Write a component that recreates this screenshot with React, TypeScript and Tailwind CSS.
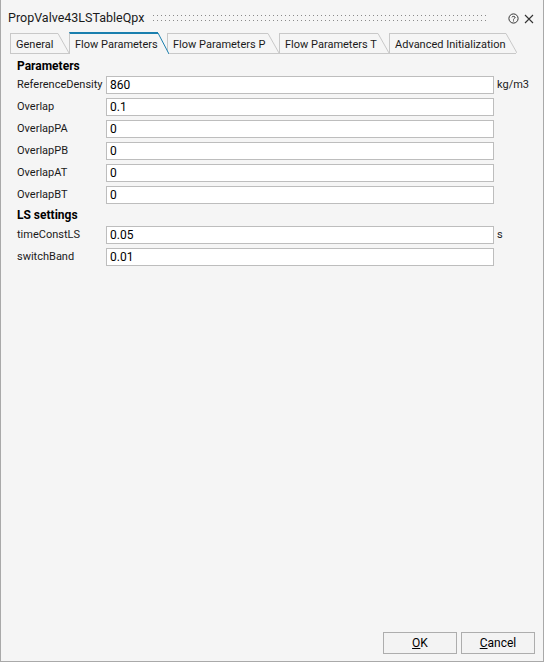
import React from "react";

const font = { fontFamily: "Roboto, 'Liberation Sans', sans-serif" };

const tabs: { label: string; w: number }[] = [
  { label: "General", w: 59 },
  { label: "Flow Parameters", w: 98 },
  { label: "Flow Parameters P", w: 112 },
  { label: "Flow Parameters T", w: 110 },
  { label: "Advanced Initialization", w: 123 },
];

const Tab: React.FC<{ label: string; w: number; active?: boolean }> = ({ label, w, active }) => {
  const h = active ? 22 : 20;
  return (
    <div
      className={`flex items-stretch flex-shrink-0 relative ${active ? "mb-[-1px] z-10" : ""}`}
      style={{ height: h, width: w }}
    >
      <div
        className={`flex-1 flex items-center pl-[5px] border-l border-l-[#c8c8c8] bg-[#f5f5f5] ${
          active ? "border-t-2 border-t-[#1a7fae] pt-[1px]" : "border-t border-t-[#c8c8c8] pt-[1px]"
        }`}
      >
        <span className="text-[11px] text-[#1a1a1a] leading-none whitespace-nowrap">{label}</span>
      </div>
      <svg width="11" height={h} className="block flex-shrink-0">
        <polygon points={`0,0 0.5,0 11,${h} 0,${h}`} fill="#f5f5f5" />
        <line x1="0" y1={active ? 1 : 0.5} x2="11" y2={h} stroke={active ? "#1a7fae" : "#c8c8c8"} strokeWidth="1" />
      </svg>
    </div>
  );
};

const Row: React.FC<{ label: string; value: string; unit?: string }> = ({ label, value, unit }) => (
  <div className="flex items-center h-[18px]">
    <div className="w-[105px] flex-shrink-0 pl-[16px] text-[11px] text-[#1a1a1a] whitespace-nowrap">{label}</div>
    <div className="w-[388px] flex-shrink-0 h-[18px] bg-white border border-[#bdbdbd] flex items-center px-[3px] text-[12px] text-black">
      {value}
    </div>
    {unit && <span className="ml-[3px] text-[11px] text-[#1a1a1a]">{unit}</span>}
  </div>
);

export default function App() {
  return (
    <div
      className="w-[544px] h-[662px] bg-[#f5f5f5] border-x border-b border-[#a9a9a9] flex flex-col"
      style={font}
    >
      {/* title bar */}
      <div className="flex items-center h-[35px] pl-[7px] pr-[10px] pt-[2px]">
        <span className="w-[145px] flex-shrink-0 text-[12.5px] text-[#1a1a1a] whitespace-nowrap">PropValve43LSTableQpx</span>
        <svg width="336" height="7" className="block flex-shrink-0">
          <defs>
            <pattern id="dots" width="4" height="5" patternUnits="userSpaceOnUse">
              <rect x="0" y="0" width="1" height="1" fill="#8a8a8a" />
            </pattern>
          </defs>
          <rect x="0" y="0" width="336" height="7" fill="url(#dots)" />
        </svg>
        <svg width="11" height="11" viewBox="0 0 11 11" className="ml-[19px] block flex-shrink-0">
          <circle cx="5.5" cy="5.5" r="4.6" fill="none" stroke="#333" strokeWidth="1" />
          <path d="M3.9 4.3 C3.9 3.2 7.1 3.0 7.1 4.4 C7.1 5.4 5.5 5.4 5.5 6.6" fill="none" stroke="#333" strokeWidth="1" />
          <rect x="5" y="7.4" width="1" height="1" fill="#333" />
        </svg>
        <svg width="10" height="10" viewBox="0 0 10 10" className="ml-[5px] block flex-shrink-0">
          <path d="M1 1 L9 9 M9 1 L1 9" stroke="#333" strokeWidth="1.1" />
        </svg>
      </div>

      {/* tabs */}
      <div className="flex items-end mx-[9px] w-[506px] border-b border-[#c8c8c8] h-[20px] mt-[-1px]">
        {tabs.map((t) => (
          <Tab key={t.label} label={t.label} w={t.w} active={t.label === "Flow Parameters"} />
        ))}
      </div>

      {/* content */}
      <div className="flex flex-col pt-[3px]">
        <div className="h-[18px] pl-[16px] text-[12px] font-bold text-black flex items-center">Parameters</div>
        <div className="flex flex-col gap-[4px] mt-[1px]">
          <Row label="ReferenceDensity" value="860" unit="kg/m3" />
          <Row label="Overlap" value="0.1" />
          <Row label="OverlapPA" value="0" />
          <Row label="OverlapPB" value="0" />
          <Row label="OverlapAT" value="0" />
          <Row label="OverlapBT" value="0" />
        </div>
        <div className="h-[18px] mt-[2px] pl-[16px] text-[12px] font-bold text-black flex items-center">LS settings</div>
        <div className="flex flex-col gap-[4px] mt-[2px]">
          <Row label="timeConstLS" value="0.05" unit="s" />
          <Row label="switchBand" value="0.01" />
        </div>
      </div>

      {/* footer */}
      <div className="mt-auto flex justify-end gap-[4px] pr-[8px] pb-[7px]">
        <button className="w-[74px] h-[22px] bg-[#f3f3f3] border border-[#adadad] text-[12px] text-black">
          <span className="underline">O</span>K
        </button>
        <button className="w-[74px] h-[22px] bg-[#f3f3f3] border border-[#adadad] text-[12px] text-black">
          <span className="underline">C</span>ancel
        </button>
      </div>
    </div>
  );
}
